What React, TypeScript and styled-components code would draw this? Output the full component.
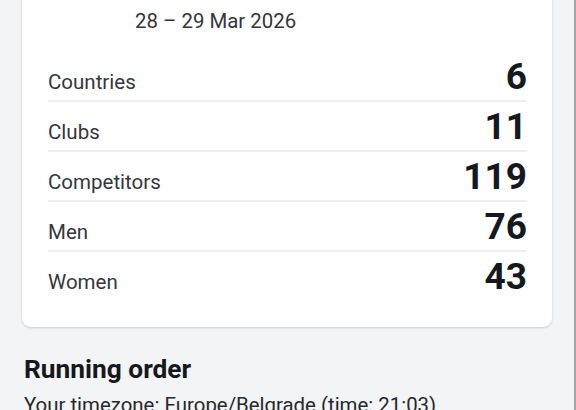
import React from "react";
import styled, { createGlobalStyle } from "styled-components";

const Global = createGlobalStyle`
  html, body { margin: 0; padding: 0; background: #f3f4f6; }
  body { font-family: Roboto, "Noto Sans", Arial, sans-serif; overflow: hidden; }
  #root { min-height: 100vh; border-right: 2px solid #a3a5a8; box-sizing: border-box; }
`;

const Page = styled.div`
  padding: 0 22px;
`;

const Card = styled.section`
  margin-top: -30px;
  background: #ffffff;
  border-radius: 9px;
  box-shadow: 0 1px 3px rgba(0, 0, 0, 0.12), 0 1px 2px rgba(0, 0, 0, 0.05);
  padding: 39px 25px 25px 26px;
`;

const DateLine = styled.div`
  padding-left: 87px;
  font-size: 20.4px;
  line-height: 24px;
  color: #333639;
  margin-bottom: 19px;
`;

const Row = styled.div<{ $last?: boolean }>`
  display: flex;
  justify-content: space-between;
  align-items: baseline;
  padding: 4px 0 2px;
  border-bottom: 2px solid ${(p) => (p.$last ? "transparent" : "#eceef0")};
`;

const Label = styled.span`
  font-size: 20.5px;
  color: #34373b;
`;

const Value = styled.span`
  font-size: 37px;
  line-height: 42px;
  font-weight: 700;
  color: #15181c;
`;

const Heading = styled.h2`
  margin: 26px 2px 8px;
  font-size: 26.3px;
  line-height: 32px;
  font-weight: 700;
  color: #15181c;
`;

const Timezone = styled.p`
  margin: 0 2px;
  font-size: 20.4px;
  line-height: 24px;
  color: #25282c;
`;

const stats = [
  ["Countries", "6"],
  ["Clubs", "11"],
  ["Competitors", "119"],
  ["Men", "76"],
  ["Women", "43"],
];

export default function App() {
  return (
    <>
      <Global />
      <Page>
        <Card>
          <DateLine>28 – 29 Mar 2026</DateLine>
          {stats.map(([l, v], i) => (
            <Row key={l} $last={i === stats.length - 1}>
              <Label>{l}</Label>
              <Value>{v}</Value>
            </Row>
          ))}
        </Card>
        <Heading>Running order</Heading>
        <Timezone>Your timezone: Europe/Belgrade (time: 21:03)</Timezone>
      </Page>
    </>
  );
}
